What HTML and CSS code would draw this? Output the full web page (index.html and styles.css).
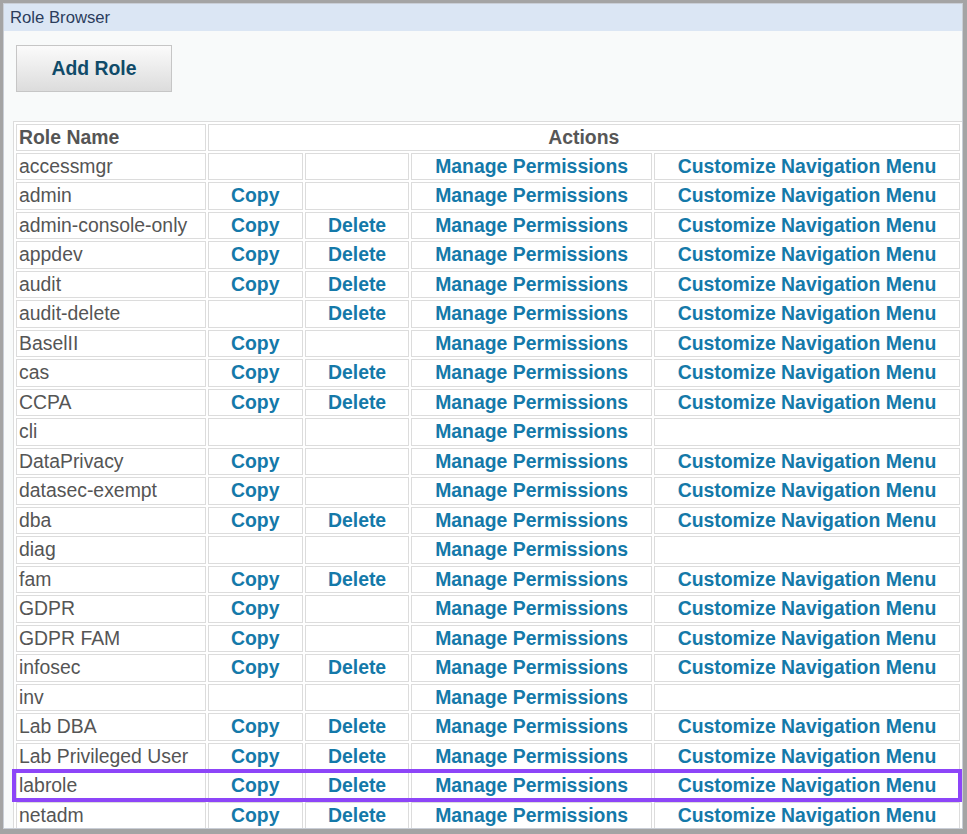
FILE: index.html
```html
<!DOCTYPE html>
<html>
<head>
<meta charset="utf-8">
<link rel="stylesheet" href="styles.css">
</head>
<body>
<div class="panel">
  <div class="titlebar">Role Browser</div>
  <div class="content">
    <button class="add-btn">Add Role</button>
    <table class="roles">
      <colgroup>
        <col class="c1"><col class="c2"><col class="c3"><col class="c4"><col class="c5">
      </colgroup>
      <thead>
        <tr><th class="name">Role Name</th><th colspan="4">Actions</th></tr>
      </thead>
      <tbody>
        <tr><td class="name">accessmgr</td><td></td><td></td><td><a>Manage Permissions</a></td><td><a>Customize Navigation Menu</a></td></tr>
        <tr><td class="name">admin</td><td><a>Copy</a></td><td></td><td><a>Manage Permissions</a></td><td><a>Customize Navigation Menu</a></td></tr>
        <tr><td class="name">admin-console-only</td><td><a>Copy</a></td><td><a>Delete</a></td><td><a>Manage Permissions</a></td><td><a>Customize Navigation Menu</a></td></tr>
        <tr><td class="name">appdev</td><td><a>Copy</a></td><td><a>Delete</a></td><td><a>Manage Permissions</a></td><td><a>Customize Navigation Menu</a></td></tr>
        <tr><td class="name">audit</td><td><a>Copy</a></td><td><a>Delete</a></td><td><a>Manage Permissions</a></td><td><a>Customize Navigation Menu</a></td></tr>
        <tr><td class="name">audit-delete</td><td></td><td><a>Delete</a></td><td><a>Manage Permissions</a></td><td><a>Customize Navigation Menu</a></td></tr>
        <tr><td class="name">BaselII</td><td><a>Copy</a></td><td></td><td><a>Manage Permissions</a></td><td><a>Customize Navigation Menu</a></td></tr>
        <tr><td class="name">cas</td><td><a>Copy</a></td><td><a>Delete</a></td><td><a>Manage Permissions</a></td><td><a>Customize Navigation Menu</a></td></tr>
        <tr><td class="name">CCPA</td><td><a>Copy</a></td><td><a>Delete</a></td><td><a>Manage Permissions</a></td><td><a>Customize Navigation Menu</a></td></tr>
        <tr><td class="name">cli</td><td></td><td></td><td><a>Manage Permissions</a></td><td></td></tr>
        <tr><td class="name">DataPrivacy</td><td><a>Copy</a></td><td></td><td><a>Manage Permissions</a></td><td><a>Customize Navigation Menu</a></td></tr>
        <tr><td class="name">datasec-exempt</td><td><a>Copy</a></td><td></td><td><a>Manage Permissions</a></td><td><a>Customize Navigation Menu</a></td></tr>
        <tr><td class="name">dba</td><td><a>Copy</a></td><td><a>Delete</a></td><td><a>Manage Permissions</a></td><td><a>Customize Navigation Menu</a></td></tr>
        <tr><td class="name">diag</td><td></td><td></td><td><a>Manage Permissions</a></td><td></td></tr>
        <tr><td class="name">fam</td><td><a>Copy</a></td><td><a>Delete</a></td><td><a>Manage Permissions</a></td><td><a>Customize Navigation Menu</a></td></tr>
        <tr><td class="name">GDPR</td><td><a>Copy</a></td><td></td><td><a>Manage Permissions</a></td><td><a>Customize Navigation Menu</a></td></tr>
        <tr><td class="name">GDPR FAM</td><td><a>Copy</a></td><td></td><td><a>Manage Permissions</a></td><td><a>Customize Navigation Menu</a></td></tr>
        <tr><td class="name">infosec</td><td><a>Copy</a></td><td><a>Delete</a></td><td><a>Manage Permissions</a></td><td><a>Customize Navigation Menu</a></td></tr>
        <tr><td class="name">inv</td><td></td><td></td><td><a>Manage Permissions</a></td><td></td></tr>
        <tr><td class="name">Lab DBA</td><td><a>Copy</a></td><td><a>Delete</a></td><td><a>Manage Permissions</a></td><td><a>Customize Navigation Menu</a></td></tr>
        <tr><td class="name">Lab Privileged User</td><td><a>Copy</a></td><td><a>Delete</a></td><td><a>Manage Permissions</a></td><td><a>Customize Navigation Menu</a></td></tr>
        <tr><td class="name">labrole</td><td><a>Copy</a></td><td><a>Delete</a></td><td><a>Manage Permissions</a></td><td><a>Customize Navigation Menu</a></td></tr>
        <tr><td class="name">netadm</td><td><a>Copy</a></td><td><a>Delete</a></td><td><a>Manage Permissions</a></td><td><a>Customize Navigation Menu</a></td></tr>
      </tbody>
    </table>
    <div class="highlight-box"></div>
  </div>
</div>
</body>
</html>
```

FILE: styles.css
```css
html, body {
  margin: 0;
  padding: 0;
  height: 100%;
}
body {
  background: #a4a4a4;
  font-family: "Liberation Sans", Arial, sans-serif;
  overflow: hidden;
}
.panel {
  margin: 3px 4px 0 3px;
  height: calc(100vh - 8px);
  background: #f8fafa;
  border: 1px solid #c9ced6;
  box-sizing: border-box;
  overflow: hidden;
}
.titlebar {
  height: 27px;
  background: #dbe6f4;
  color: #2b3d5c;
  font-size: 16.7px;
  line-height: 27px;
  padding-left: 6px;
}
.content {
  position: relative;
  padding: 14px 0 0 9px;
}
.add-btn {
  display: block;
  width: 156px;
  height: 47px;
  margin-left: 3px;
  border: 1px solid #c6c6c6;
  background: linear-gradient(#fbfbfb, #dcdcdc);
  color: #104b69;
  font-family: "Liberation Sans", Arial, sans-serif;
  font-size: 19.4px;
  font-weight: bold;
  padding: 0;
}
.roles {
  margin-top: 29px;
  border: 1px solid #dcdcdc;
  border-spacing: 2px;
  background: #ffffff;
  width: 950px;
  table-layout: fixed;
}
.c1 { width: 189px; }
.c2 { width: 95px; }
.c3 { width: 104px; }
.c4 { width: 240px; }
.c5 { width: 305px; }
.roles th, .roles td {
  border: 1px solid #dcdcdc;
  padding: 2px 3px;
  font-size: 19.4px;
  line-height: 21.5px;
  height: 21.5px;
  text-align: center;
  white-space: nowrap;
  overflow: hidden;
}
.roles thead th {
  padding-top: 2px;
  padding-bottom: 1px;
}
.roles th {
  font-weight: bold;
  color: #575757;
}
.roles td.name, .roles th.name {
  text-align: left;
  padding-left: 2px;
  color: #555555;
}
.roles a {
  color: #1479a9;
  font-weight: bold;
  text-decoration: none;
}
.highlight-box {
  position: absolute;
  left: 8px;
  top: 738px;
  width: 950px;
  height: 33px;
  border: 4px solid #8d45f8;
  box-sizing: border-box;
  pointer-events: none;
}
```
